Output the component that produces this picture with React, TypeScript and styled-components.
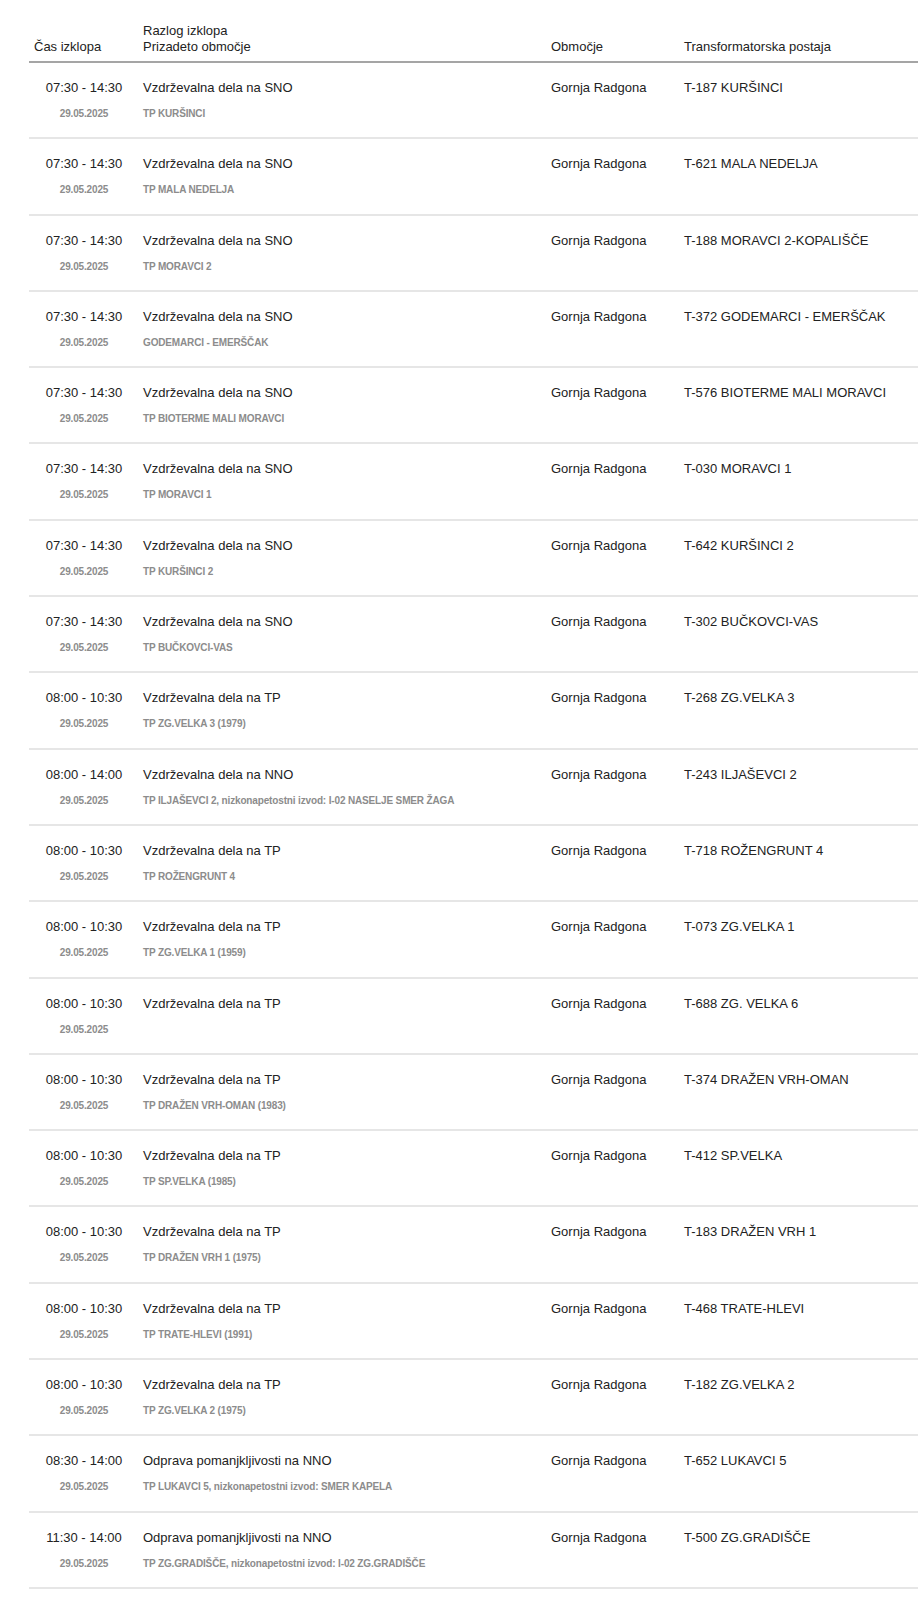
import styled, { createGlobalStyle } from "styled-components"

const Global = createGlobalStyle`
    body {
        margin: 0;
        background: #fff;
        font-family: "Liberation Sans", Arial, sans-serif;
        color: #222;
    }
`

const Page = styled.div`
    padding: 23px 0 0 29px;
    overflow: hidden;
`

const Table = styled.section`
    width: 100%;
`

const cols = `114px 408px 133px 1fr`

const HeadRow = styled.div`
    display: grid;
    grid-template-columns: ${cols};
    align-items: end;
    padding-bottom: 6px;
    border-bottom: 2px solid #a5a5a5;
    font-size: 13px;
    line-height: 16px;
    color: #222;
`

const HeadCell = styled.div<{ $pad?: number }>`
    padding-left: ${(p) => p.$pad ?? 0}px;
`

const Row = styled.div`
    display: grid;
    grid-template-columns: ${cols};
    height: 74.3px;
    border-bottom: 2px solid #e6e6e6;
    box-sizing: content-box;
`

const TimeCell = styled.div`
    padding-right: 4px;
    text-align: center;
`

const Main = styled.div`
    margin-top: 17px;
    font-size: 13px;
    line-height: 16px;
    color: #222;
    white-space: nowrap;
`

const Sub = styled.div`
    margin-top: 12px;
    font-size: 10px;
    line-height: 12px;
    font-weight: 700;
    letter-spacing: -0.15px;
    color: #8c8c8c;
    white-space: nowrap;
`

type Outage = {
    time: string
    reason: string
    area: string
    station: string
}

const SNO = "Vzdrževalna dela na SNO"
const TP = "Vzdrževalna dela na TP"
const NNO = "Vzdrževalna dela na NNO"
const ODP = "Odprava pomanjkljivosti na NNO"
const A = "07:30 - 14:30"
const B = "08:00 - 10:30"

const outages: Outage[] = [
    { time: A, reason: SNO, area: "TP KURŠINCI", station: "T-187 KURŠINCI" },
    { time: A, reason: SNO, area: "TP MALA NEDELJA", station: "T-621 MALA NEDELJA" },
    { time: A, reason: SNO, area: "TP MORAVCI 2", station: "T-188 MORAVCI 2-KOPALIŠČE" },
    { time: A, reason: SNO, area: "GODEMARCI - EMERŠČAK", station: "T-372 GODEMARCI - EMERŠČAK" },
    { time: A, reason: SNO, area: "TP BIOTERME MALI MORAVCI", station: "T-576 BIOTERME MALI MORAVCI" },
    { time: A, reason: SNO, area: "TP MORAVCI 1", station: "T-030 MORAVCI 1" },
    { time: A, reason: SNO, area: "TP KURŠINCI 2", station: "T-642 KURŠINCI 2" },
    { time: A, reason: SNO, area: "TP BUČKOVCI-VAS", station: "T-302 BUČKOVCI-VAS" },
    { time: B, reason: TP, area: "TP ZG.VELKA 3 (1979)", station: "T-268 ZG.VELKA 3" },
    { time: "08:00 - 14:00", reason: NNO, area: "TP ILJAŠEVCI 2, nizkonapetostni izvod: I-02 NASELJE SMER ŽAGA", station: "T-243 ILJAŠEVCI 2" },
    { time: B, reason: TP, area: "TP ROŽENGRUNT 4", station: "T-718 ROŽENGRUNT 4" },
    { time: B, reason: TP, area: "TP ZG.VELKA 1 (1959)", station: "T-073 ZG.VELKA 1" },
    { time: B, reason: TP, area: "", station: "T-688 ZG. VELKA 6" },
    { time: B, reason: TP, area: "TP DRAŽEN VRH-OMAN (1983)", station: "T-374 DRAŽEN VRH-OMAN" },
    { time: B, reason: TP, area: "TP SP.VELKA (1985)", station: "T-412 SP.VELKA" },
    { time: B, reason: TP, area: "TP DRAŽEN VRH 1 (1975)", station: "T-183 DRAŽEN VRH 1" },
    { time: B, reason: TP, area: "TP TRATE-HLEVI (1991)", station: "T-468 TRATE-HLEVI" },
    { time: B, reason: TP, area: "TP ZG.VELKA 2 (1975)", station: "T-182 ZG.VELKA 2" },
    { time: "08:30 - 14:00", reason: ODP, area: "TP LUKAVCI 5, nizkonapetostni izvod: SMER KAPELA", station: "T-652 LUKAVCI 5" },
    { time: "11:30 - 14:00", reason: ODP, area: "TP ZG.GRADIŠČE, nizkonapetostni izvod: I-02 ZG.GRADIŠČE", station: "T-500 ZG.GRADIŠČE" },
]

export default function App() {
    return <Page>
        <Global />
        <Table>
            <HeadRow>
                <HeadCell $pad={5}>Čas izklopa</HeadCell>
                <HeadCell>Razlog izklopa<br />Prizadeto območje</HeadCell>
                <HeadCell>Območje</HeadCell>
                <HeadCell>Transformatorska postaja</HeadCell>
            </HeadRow>
            {outages.map((o, i) => <Row key={i}>
                <TimeCell>
                    <Main>{o.time}</Main>
                    <Sub>29.05.2025</Sub>
                </TimeCell>
                <div>
                    <Main>{o.reason}</Main>
                    <Sub>{o.area}</Sub>
                </div>
                <div><Main>Gornja Radgona</Main></div>
                <div><Main>{o.station}</Main></div>
            </Row>)}
        </Table>
    </Page>
}
